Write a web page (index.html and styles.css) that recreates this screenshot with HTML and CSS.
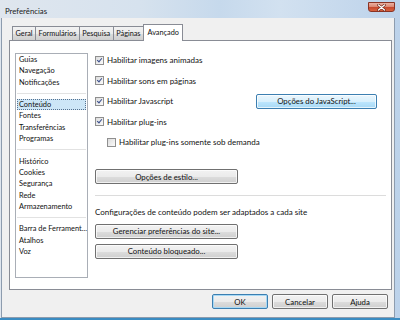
FILE: index.html
```html
<!DOCTYPE html>
<html lang="pt">
<head>
    <meta charset="UTF-8">
    <title>Preferências</title>
    <link rel="stylesheet" href="styles.css">
</head>
<body>

<div class="window">
    <div class="titlebar">
        <span class="title">Preferências</span>
        <span class="close">
            <svg width="9" height="7" viewBox="0 0 9 7">
                <path d="M1.5 1 L7.5 6 M7.5 1 L1.5 6" stroke="#6b2a20" stroke-width="2.6" stroke-linecap="round"/>
                <path d="M1.5 1 L7.5 6 M7.5 1 L1.5 6" stroke="#ffffff" stroke-width="1.3" stroke-linecap="round"/>
            </svg>
        </span>
    </div>

    <div class="client">
        <!-- Tabs -->
        <div class="tabs">
            <span class="tab">Geral</span>
            <span class="tab">Formulários</span>
            <span class="tab">Pesquisa</span>
            <span class="tab">Páginas</span>
            <span class="tab active">Avançado</span>
        </div>

        <div class="panel">
            <ul class="sections">
                <li>Guias</li>
                <li>Navegação</li>
                <li>Notificações</li>
                <li class="sep"></li>
                <li class="selected">Conteúdo</li>
                <li>Fontes</li>
                <li>Transferências</li>
                <li>Programas</li>
                <li class="sep"></li>
                <li>Histórico</li>
                <li>Cookies</li>
                <li>Segurança</li>
                <li>Rede</li>
                <li>Armazenamento</li>
                <li class="sep"></li>
                <li>Barra de Ferrament...</li>
                <li>Atalhos</li>
                <li>Voz</li>
            </ul>

            <div class="content">
                <div class="check"><span class="box on"></span>Habilitar imagens animadas</div>
                <div class="check"><span class="box on"></span>Habilitar sons em páginas</div>
                <div class="check">
                    <span class="box on"></span>Habilitar Javascript
                    <button class="btn hot js-button">Opções do JavaScript...</button>
                </div>
                <div class="check"><span class="box on"></span>Habilitar plug-ins</div>
                <div class="check sub"><span class="box"></span>Habilitar plug-ins somente sob demanda</div>

                <button class="btn wide style-button">Opções de estilo...</button>
                <div class="rule"></div>
                <p class="note">Configurações de conteúdo podem ser adaptados a cada site</p>
                <button class="btn wide">Gerenciar preferências do site...</button>
                <button class="btn wide blocked">Conteúdo bloqueado...</button>
            </div>
        </div>

        <!-- Dialog buttons -->
        <div class="actions">
            <button class="btn default">OK</button>
            <button class="btn">Cancelar</button>
            <button class="btn">Ajuda</button>
        </div>
    </div>
</div>

</body>
</html>
```

FILE: styles.css
```css
body {
    margin: 0;
    font-family: Lato, "Liberation Sans", sans-serif;
    font-size: 8px;
    color: #111;
}
.window {
    width: 400px;
    height: 320px;
    box-sizing: border-box;
    display: flex;
    flex-direction: column;
    background: linear-gradient(90deg, #dfe6ee 0%, #d6e2ee 35%, #c6d9ec 55%, #d2e1f0 70%, #bcd2ea 100%);
    border-bottom: 2px solid #3a8cc2;
}
.titlebar {
    height: 18px;
    flex: none;
    display: flex;
    align-items: flex-start;
}
.title {
    margin: 6px 0 0 5px;
    font-size: 7.8px;
    color: #1b1b1b;
}
.close {
    margin: 2px 5px 0 auto;
    width: 27px;
    height: 10px;
    box-sizing: border-box;
    border: 1px solid #8a3324;
    border-radius: 0 0 3px 3px;
    background: linear-gradient(#eab0a2 0%, #dc8a76 45%, #c6492f 55%, #d8623f 100%);
    display: flex;
    align-items: center;
    justify-content: center;
}
.client {
    flex: 1;
    margin: 0 5px 0 1px;
    background: #f0f0f0;
    border: 1px solid #8d9cae;
    border-top: none;
    display: flex;
    flex-direction: column;
}
.tabs {
    height: 22px;
    padding-left: 10px;
    display: flex;
    align-items: flex-end;
}
.tab {
    height: 14px;
    box-sizing: border-box;
    padding: 0 2.5px;
    font-size: 7.3px;
    line-height: 13px;
    border: 1px solid #898c95;
    border-bottom: none;
    margin-right: -1px;
    background: linear-gradient(#f2f2f2 0%, #ebebeb 50%, #dddddd 51%, #cfcfcf 100%);
}
.tab.active {
    height: 17px;
    margin-bottom: -1px;
    padding: 0 3.5px;
    line-height: 15px;
    background: #fff;
    position: relative;
}
.panel {
    height: 250px;
    box-sizing: border-box;
    margin: 0 2px 0 7px;
    padding: 9px 5px 11px 5px;
    border: 1px solid #898c95;
    background: #fff;
    display: flex;
    gap: 7px;
}
.sections {
    margin: 3px 0 0 0;
    padding: 0 1px;
    width: 73px;
    box-sizing: border-box;
    list-style: none;
    border: 1px solid #a9aeb6;
    font-size: 7.4px;
}
.sections li {
    height: 11.3px;
    line-height: 11.3px;
    padding-left: 2px;
    white-space: nowrap;
}
.sections li.sep {
    height: 11.3px;
    background: linear-gradient(#fff 5px, #e2e2e2 5px, #e2e2e2 6px, #fff 6px);
}
.sections li.selected {
    box-sizing: border-box;
    padding-left: 1px;
    background: #cde6f7;
    border: 1px dotted #56718f;
    line-height: 9.3px;
}
.content {
    flex: 1;
    display: flex;
    flex-direction: column;
    align-items: flex-start;
}
.check {
    height: 20.5px;
    align-self: stretch;
    display: flex;
    align-items: center;
    white-space: nowrap;
}
.check.sub {
    padding-left: 12px;
}
.box {
    width: 9px;
    height: 9px;
    box-sizing: border-box;
    margin-right: 3px;
    border: 1px solid #8f8f8f;
    background: linear-gradient(135deg, #dcdcdc, #fbfbfb);
    position: relative;
}
.box.on::after {
    content: "";
    position: absolute;
    left: 2px;
    top: 0;
    width: 2px;
    height: 4px;
    border: solid #3b4f8d;
    border-width: 0 1.5px 1.5px 0;
    transform: rotate(40deg);
}
.btn {
    height: 15px;
    width: 56px;
    padding: 0;
    font-family: inherit;
    font-size: 7.8px;
    color: #111;
    border: 1px solid #707070;
    border-radius: 2px;
    background: linear-gradient(#f2f2f2 0%, #ebebeb 50%, #dddddd 51%, #cfcfcf 100%);
    box-shadow: inset 0 0 0 1px rgba(255, 255, 255, 0.7);
}
.btn.hot {
    border-color: #3c7fb1;
    background: linear-gradient(#eaf6fd 0%, #d9f0fc 50%, #bee6fd 51%, #a7d9f5 100%);
}
.js-button {
    width: 121px;
    margin: 0 9px 0 auto;
}
.btn.wide {
    width: 143px;
}
.style-button {
    margin-top: 16.5px;
}
.rule {
    align-self: stretch;
    height: 1px;
    margin-top: 10.5px;
    background: #dcdcdc;
}
.note {
    margin: 10px 0 0 0;
    height: 12px;
    line-height: 12px;
    white-space: nowrap;
}
.note + .btn {
    margin-top: 6px;
}
.blocked {
    margin-top: 5px;
}
.actions {
    margin-top: 4px;
    padding-right: 6px;
    display: flex;
    justify-content: flex-end;
    gap: 4px;
}
.btn.default {
    border-color: #3c7fb1;
    box-shadow: inset 0 0 0 1px #a7d9f5;
}
```
